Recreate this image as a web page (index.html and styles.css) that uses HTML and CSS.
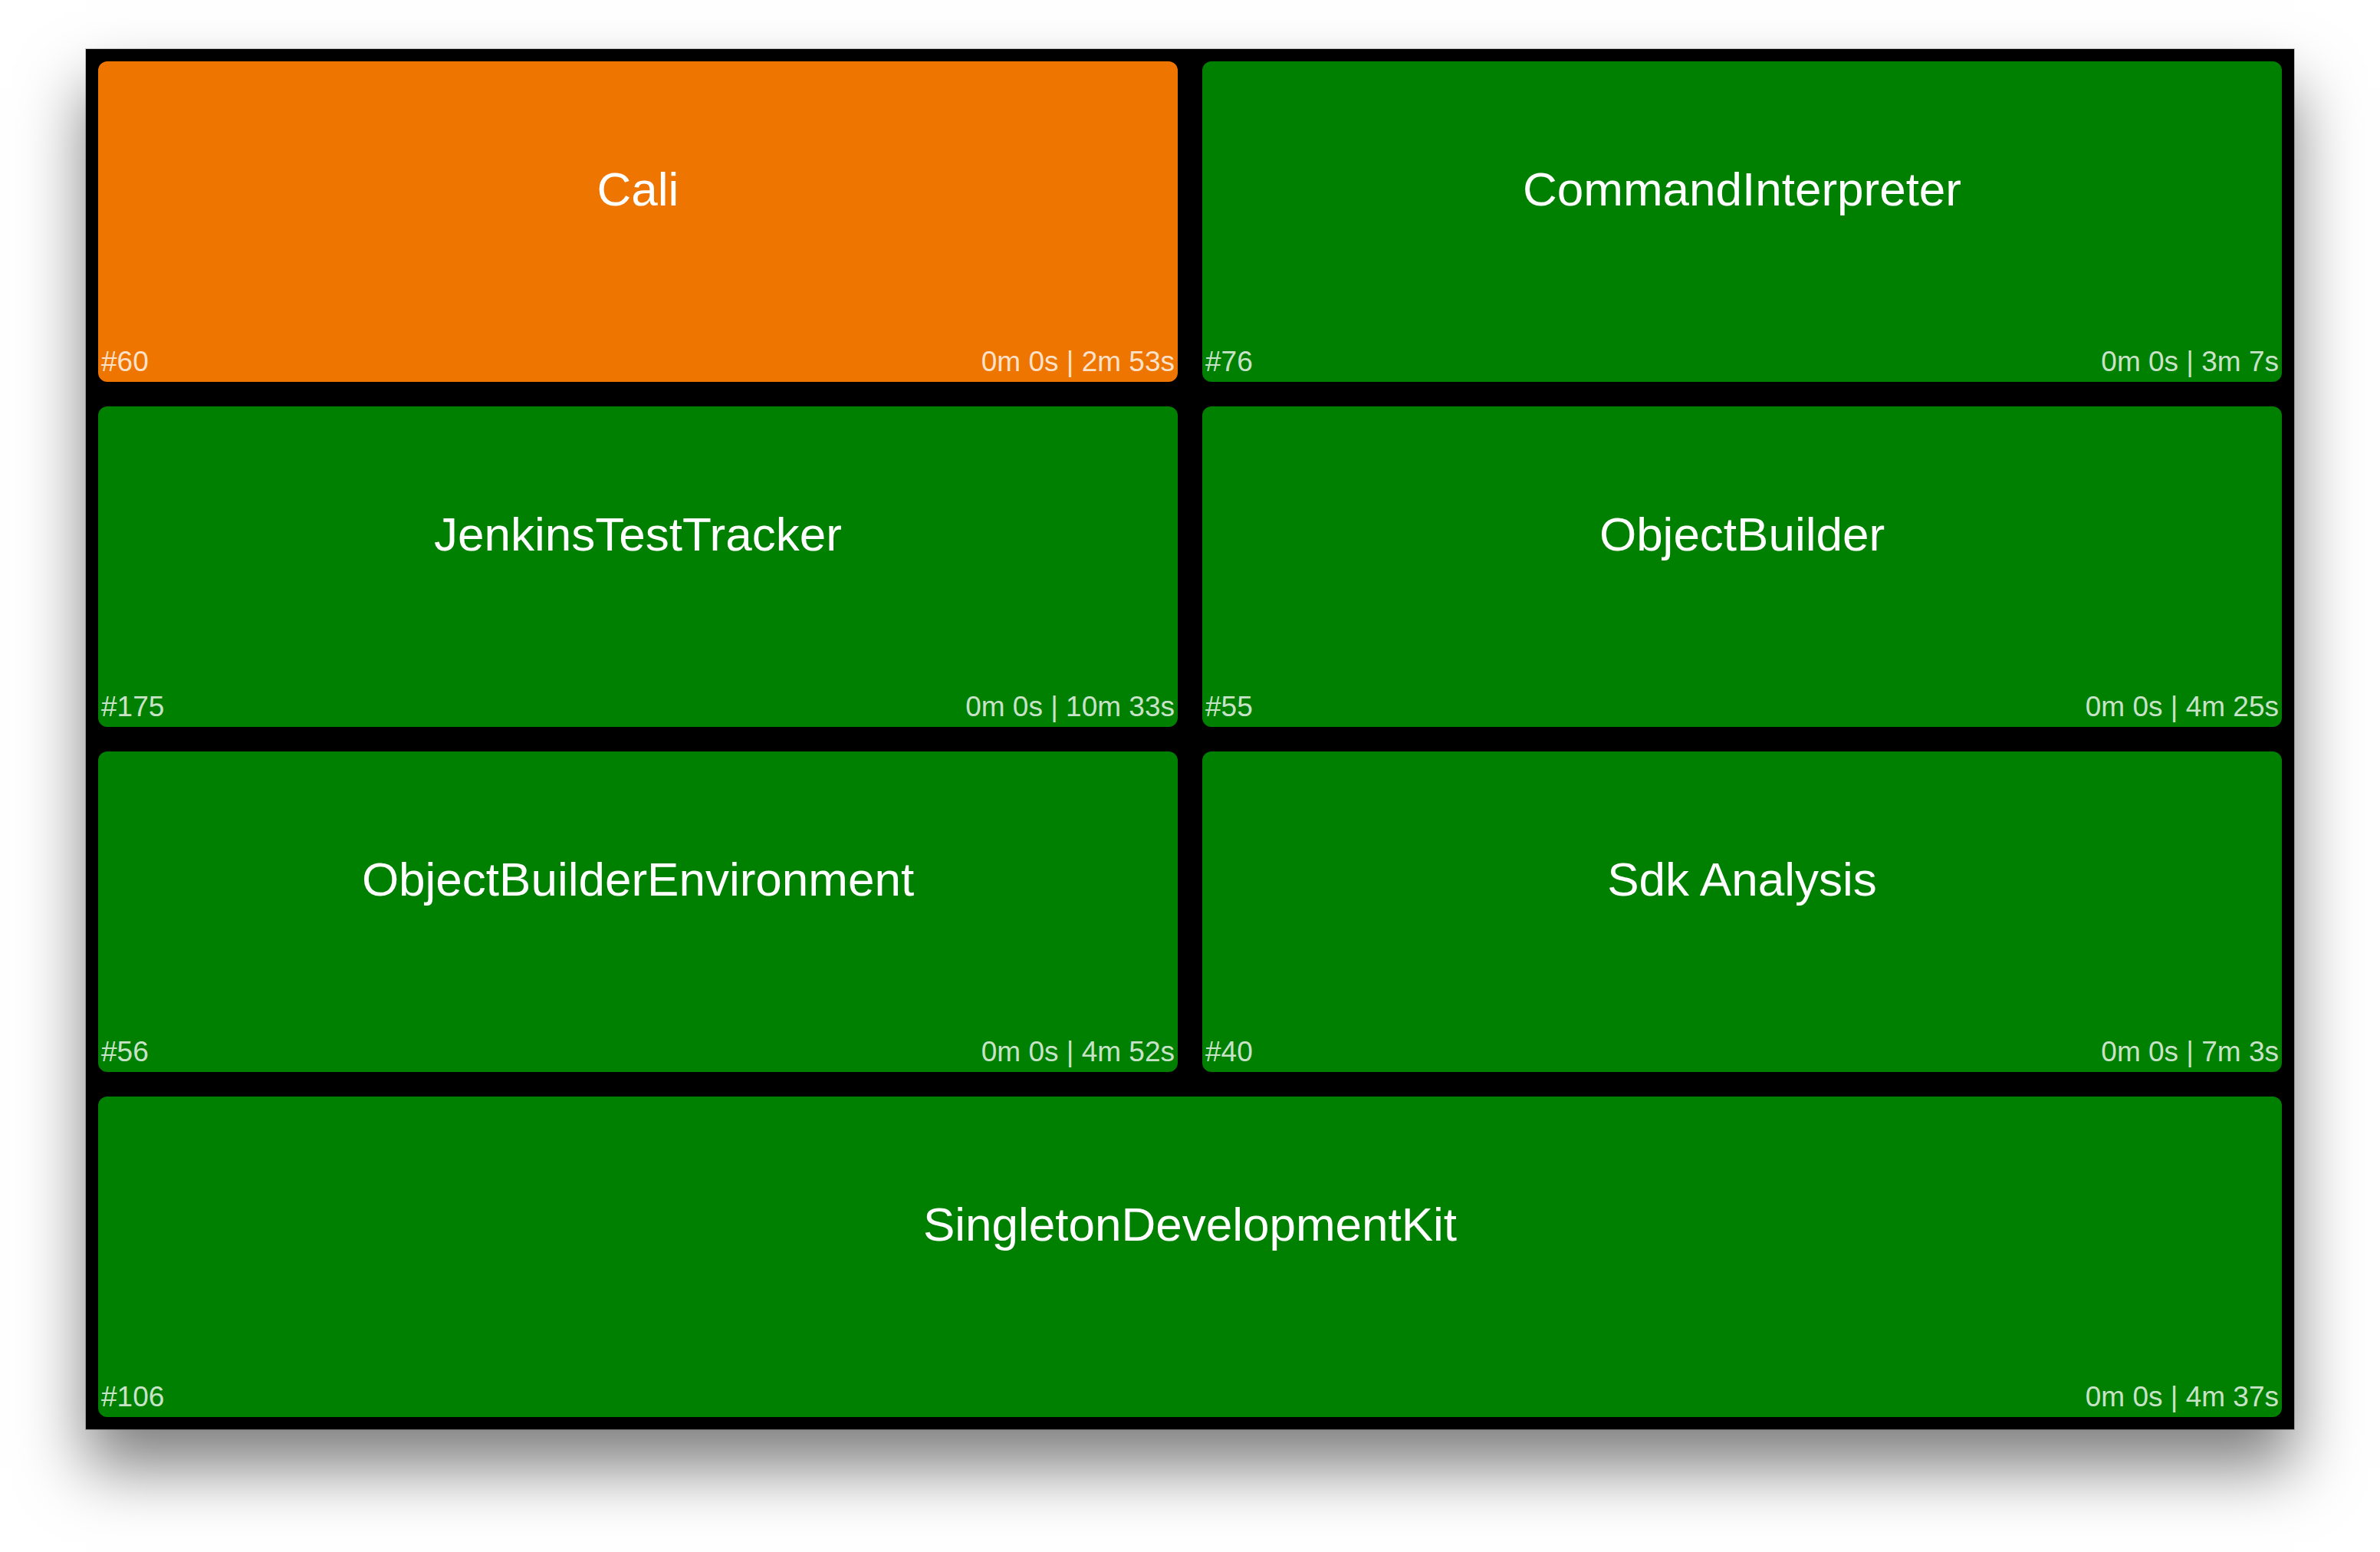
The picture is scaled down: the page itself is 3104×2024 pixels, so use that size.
FILE: index.html
```html
<!DOCTYPE html>
<html lang="en">
<head>
  <meta charset="utf-8">
  <title>Build Monitor</title>
  <link rel="stylesheet" href="styles.css">
</head>
<body>
  <main class="wall">
    <article class="job job-claimed">
      <h2 class="job-name">Cali</h2>
      <footer class="job-info"><span>#60</span><span>0m 0s | 2m 53s</span></footer>
    </article>
    <article class="job">
      <h2 class="job-name">CommandInterpreter</h2>
      <footer class="job-info"><span>#76</span><span>0m 0s | 3m 7s</span></footer>
    </article>
    <article class="job">
      <h2 class="job-name">JenkinsTestTracker</h2>
      <footer class="job-info"><span>#175</span><span>0m 0s | 10m 33s</span></footer>
    </article>
    <article class="job">
      <h2 class="job-name">ObjectBuilder</h2>
      <footer class="job-info"><span>#55</span><span>0m 0s | 4m 25s</span></footer>
    </article>
    <article class="job">
      <h2 class="job-name">ObjectBuilderEnvironment</h2>
      <footer class="job-info"><span>#56</span><span>0m 0s | 4m 52s</span></footer>
    </article>
    <article class="job">
      <h2 class="job-name">Sdk Analysis</h2>
      <footer class="job-info"><span>#40</span><span>0m 0s | 7m 3s</span></footer>
    </article>
    <article class="job job-wide">
      <h2 class="job-name">SingletonDevelopmentKit</h2>
      <footer class="job-info"><span>#106</span><span>0m 0s | 4m 37s</span></footer>
    </article>
  </main>
</body>
</html>
```
FILE: styles.css
```css
* {
  box-sizing: border-box;
}

body {
  display: flex;
  min-height: 100vh;
  margin: 0;
  padding: 64px 112px 160px;
  background: #fff;
  font-family: "Liberation Sans", Arial, sans-serif;
}

.wall {
  flex: 1;
  display: grid;
  grid-template-columns: repeat(2, minmax(0, 1fr));
  grid-auto-rows: 1fr;
  gap: 32px;
  padding: 16px;
  background: #000;
  box-shadow: 0 0 0 1px rgba(0, 0, 0, 0.2), 0 50px 80px rgba(0, 0, 0, 0.5);
}

.job {
  display: flex;
  flex-direction: column;
  padding: 0 4px 5px;
  border-radius: 12px;
  background: #008000;
  color: #fff;
}

.job-claimed {
  background: #ee7600;
}

.job-wide {
  grid-column: 1 / -1;
}

.job-name {
  flex: 1;
  display: flex;
  align-items: center;
  justify-content: center;
  margin: 0;
  font-size: 62px;
  font-weight: 400;
  line-height: 72px;
}

.job-info {
  display: flex;
  justify-content: space-between;
  padding-top: 37px;
  font-size: 37px;
  line-height: 42px;
  color: rgba(255, 255, 255, 0.8);
}
```
